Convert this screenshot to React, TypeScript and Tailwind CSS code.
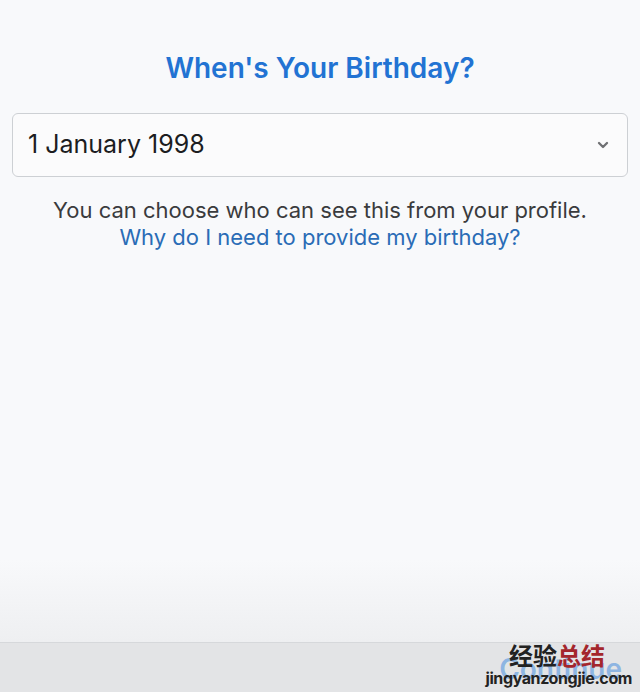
import { ChevronDown } from "lucide-react";

export default function App() {
  return (
    <div
      className="flex h-[692px] w-[640px] flex-col overflow-hidden bg-[#f8f9fb]"
      style={{ fontFamily: "Inter, 'Noto Sans CJK SC', sans-serif" }}
    >
      <main className="flex flex-1 flex-col px-3 pt-[49px]">
        <h1 className="text-center text-[28px] font-semibold leading-[38px] text-[#2273d3]">
          When&apos;s Your Birthday?
        </h1>
        <div className="mt-[26px] flex h-[64px] items-center justify-between rounded-md border border-[#cdd0d4] bg-[#fbfbfc] pl-[15px] pr-[16px]">
          <span className="text-[25px] text-[#1c1d1f]">1 January 1998</span>
          <ChevronDown className="h-[16px] w-[16px] text-[#6f7073]" strokeWidth={3.5} />
        </div>
        <div className="mt-[20px] text-center text-[22px] leading-[27px]">
          <p className="text-[#3a3b3d]">You can choose who can see this from your profile.</p>
          <a className="text-[#2a6cb6]">Why do I need to provide my birthday?</a>
        </div>
        <div className="flex-1" />
        <div className="-mx-3 h-[82px] bg-gradient-to-b from-[#f8f9fb] to-[#eeeff1]" />
      </main>
      <footer className="relative h-[50px] border-t border-[#d6d8db] bg-[#e3e4e6]">
        <span className="absolute right-[18px] top-[10px] text-[28px] font-semibold leading-[32px] text-[#3b88e0] opacity-50">
          Continue
        </span>
        <span className="absolute right-[35px] top-[1px] text-[24px] font-bold leading-[26px]">
          <span className="text-[#222]">经验</span>
          <span className="text-[#a4262c]">总结</span>
        </span>
        <span className="absolute right-[8px] top-[26px] text-[16px] font-bold leading-[18px] tracking-tight text-[#222]">
          jingyanzongjie.com
        </span>
      </footer>
    </div>
  );
}
